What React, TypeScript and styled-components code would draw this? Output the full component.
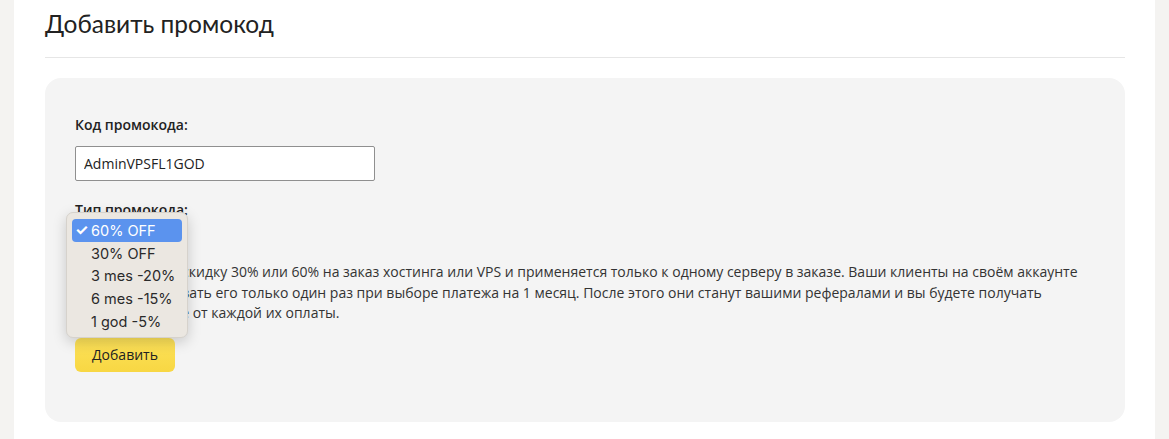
import React from 'react';
import styled, { createGlobalStyle } from 'styled-components';

const GlobalStyle = createGlobalStyle`
  html, body {
    margin: 0;
    padding: 0;
    background: #ffffff;
  }
  * {
    box-sizing: border-box;
  }
`;

const Page = styled.div`
  display: flex;
  width: 1169px;
  height: 439px;
  overflow: hidden;
  font-family: 'Open Sans', 'Noto Sans', sans-serif;
  color: #222;
`;

const SideStrip = styled.div<{ $width: number }>`
  flex: 0 0 ${(p) => p.$width}px;
  background: #f4f3f1;
`;

const Main = styled.main`
  flex: 1;
  background: #fff;
  padding: 0 30px 0 31px;
`;

const Title = styled.h1`
  margin: 0;
  padding-top: 7px;
  font-family: 'Lato', 'Inter', sans-serif;
  font-weight: 400;
  font-size: 24.5px;
  line-height: 34px;
  color: #222;
`;

const Divider = styled.hr`
  margin: 16px 0 20px;
  border: none;
  border-top: 1px solid #e6e6e6;
`;

const Panel = styled.section`
  background: #f4f4f4;
  border-radius: 16px;
  padding: 37px 30px 50px;
  height: 344px;
`;

const Label = styled.div`
  font-size: 14px;
  font-weight: 600;
  line-height: 20px;
  color: #222;
`;

const TextInput = styled.input`
  display: block;
  margin: 11px 0 19px;
  width: 300px;
  height: 35px;
  padding: 0 8px;
  border: 1px solid #8f8f8f;
  border-radius: 2px;
  background: #fff;
  font-family: 'Open Sans', sans-serif;
  font-size: 14px;
  color: #222;
`;

const SelectWrap = styled.div`
  position: relative;
  height: 42px;
`;

// open native dropdown list, drawn over the text below
const Popup = styled.div`
  position: absolute;
  left: -9px;
  top: -8px;
  width: 122px;
  height: 126px;
  padding: 6px 5px;
  border-radius: 7px;
  background: #ebe7e1;
  border: 1px solid #d6d2cc;
  box-shadow: 0 4px 14px rgba(0, 0, 0, 0.18);
  z-index: 2;
  font-family: 'Inter', 'Liberation Sans', sans-serif;
  font-size: 14.5px;
`;

const Option = styled.div<{ $active?: boolean }>`
  display: flex;
  align-items: center;
  height: 22.7px;
  padding-left: 19px;
  position: relative;
  border-radius: 4px;
  background: ${(p) => (p.$active ? '#5b93ee' : 'transparent')};
  color: ${(p) => (p.$active ? '#fff' : '#2a2a2a')};
`;

const Check = styled.span`
  position: absolute;
  left: 3px;
  top: 0;
  font-size: 15px;
  font-weight: 700;
  line-height: 22px;
`;

const Description = styled.p`
  margin: 0 0 14px;
  font-size: 14px;
  line-height: 20.5px;
  color: #333;
  max-width: 1010px;
`;

const AddButton = styled.button`
  width: 100px;
  height: 34px;
  border: none;
  border-radius: 6px;
  background: linear-gradient(#fde25a, #f8d743);
  font-family: 'Open Sans', sans-serif;
  font-size: 14px;
  color: #222;
`;

const options = ['60% OFF', '30% OFF', '3 mes -20%', '6 mes -15%', '1 god -5%'];

export default function App() {
  return (
    <Page>
      <GlobalStyle />
      <SideStrip $width={14} />
      <Main>
        <Title>Добавить промокод</Title>
        <Divider />
        <Panel>
          <Label>Код промокода:</Label>
          <TextInput defaultValue="AdminVPSFL1GOD" />
          <Label>Тип промокода:</Label>
          <SelectWrap>
            <Popup>
              {options.map((o, i) => (
                <Option key={o} $active={i === 0}>
                  {i === 0 && <Check>✓</Check>}
                  {o}
                </Option>
              ))}
            </Popup>
          </SelectWrap>
          <Description>
            Промокод дает скидку 30% или 60% на заказ хостинга или VPS и применяется только к одному серверу в заказе. Ваши клиенты на своём аккаунте
            могут использовать его только один раз при выборе платежа на 1 месяц. После этого они станут вашими рефералами и вы будете получать
            вознаграждение от каждой их оплаты.
          </Description>
          <AddButton>Добавить</AddButton>
        </Panel>
      </Main>
      <SideStrip $width={14} />
    </Page>
  );
}
